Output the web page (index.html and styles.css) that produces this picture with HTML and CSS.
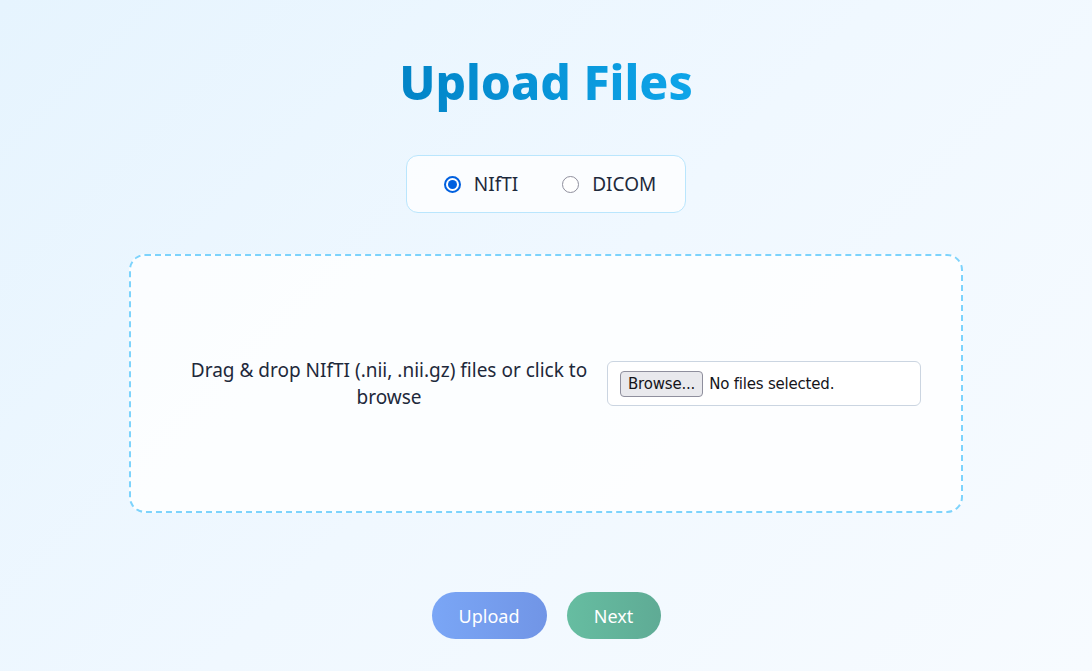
FILE: index.html
```html
<!DOCTYPE html>
<html lang="en">
<head>
<meta charset="utf-8">
<title>Upload Files</title>
<link rel="stylesheet" href="styles.css">
</head>
<body>
<main class="page">
  <h1 class="title">Upload Files</h1>

  <div class="type-switch">
    <label class="radio-option">
      <span class="radio radio-checked"></span>
      <span class="radio-label">NIfTI</span>
    </label>
    <label class="radio-option">
      <span class="radio"></span>
      <span class="radio-label">DICOM</span>
    </label>
  </div>

  <section class="dropzone">
    <p class="drop-text">Drag &amp; drop NIfTI (.nii, .nii.gz) files or click to browse</p>
    <div class="file-field">
      <span class="browse-btn">Browse...</span>
      <span class="file-status">No files selected.</span>
    </div>
  </section>

  <div class="actions">
    <button class="btn btn-upload">Upload</button>
    <button class="btn btn-next">Next</button>
  </div>
</main>
</body>
</html>
```

FILE: styles.css
```css
* { box-sizing: border-box; }

html, body {
  margin: 0;
  height: 100%;
}

body {
  font-family: "Noto Sans", "Open Sans", sans-serif;
  color: #1e293b;
  background: linear-gradient(135deg, #e6f4fe 0%, #f0f8ff 50%, #f7fbff 100%);
  overflow: hidden;
}

.page {
  display: flex;
  flex-direction: column;
  align-items: center;
  padding-top: 52px;
}

.title {
  margin: 0;
  font-size: 48px;
  font-weight: 800;
  line-height: 60px;
  background: linear-gradient(90deg, #0284c7 0%, #0ea5e9 100%);
  -webkit-background-clip: text;
  background-clip: text;
  color: transparent;
}

.type-switch {
  margin-top: 43px;
  display: flex;
  align-items: center;
  gap: 44px;
  height: 58px;
  padding: 0 29px 0 37px;
  border: 1px solid #bae6fd;
  border-radius: 12px;
  background: rgba(255, 255, 255, 0.75);
}

.radio-option {
  display: flex;
  align-items: center;
  gap: 13px;
  font-size: 19px;
  color: #1e293b;
}

.radio {
  width: 17px;
  height: 17px;
  border-radius: 50%;
  border: 1px solid #8f8f9d;
  background: #fff;
  position: relative;
}

.radio-checked {
  border: 2px solid #0060df;
}

.radio-checked::after {
  content: "";
  position: absolute;
  inset: 2px;
  border-radius: 50%;
  background: #0060df;
}

.dropzone {
  margin-top: 41px;
  width: 834px;
  height: 259px;
  border: 2px dashed #7dd3fc;
  border-radius: 16px;
  background: rgba(255, 255, 255, 0.8);
  display: flex;
  align-items: center;
  justify-content: center;
}

.drop-text {
  margin: 0;
  width: 436px;
  text-align: center;
  font-size: 19px;
  line-height: 27px;
  color: #1e293b;
}

.file-field {
  width: 314px;
  height: 45px;
  border: 1px solid #cbd5e1;
  border-radius: 6px;
  background: #fff;
  display: flex;
  align-items: center;
  padding: 0 12px;
  gap: 6px;
  font-family: "DejaVu Sans", "Liberation Sans", sans-serif;
  font-size: 15px;
  color: #15141a;
}

.browse-btn {
  height: 26px;
  padding: 0 7px;
  display: flex;
  align-items: center;
  background: #e9e9ed;
  border: 1px solid #8f8f9d;
  border-radius: 4px;
  letter-spacing: -0.2px;
}

.file-status {
  letter-spacing: -0.2px;
}

.actions {
  margin-top: 79px;
  display: flex;
  gap: 20px;
}

.btn {
  height: 47px;
  border: none;
  border-radius: 24px;
  font-family: "Noto Sans", "Open Sans", sans-serif;
  font-size: 18px;
  color: #fff;
  padding: 0;
}

.btn-upload {
  width: 115px;
  background: linear-gradient(90deg, #7aa6f6 0%, #7195e6 100%);
}

.btn-next {
  width: 94px;
  background: linear-gradient(90deg, #66bda1 0%, #5fab95 100%);
}
```
